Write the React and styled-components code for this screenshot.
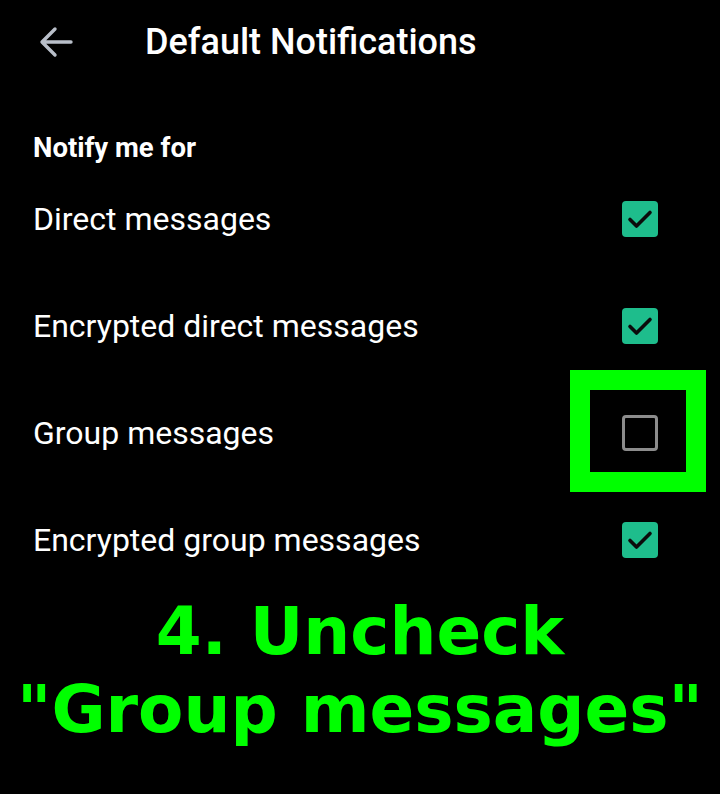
import React from "react";
import styled, { createGlobalStyle } from "styled-components";

const Global = createGlobalStyle`
  html, body { margin: 0; padding: 0; background: #000; }
  body { font-family: Roboto, "Noto Sans", sans-serif; color: #fff; }
`;

const Screen = styled.div`
  width: 720px;
  height: 794px;
  background: #000;
  display: flex;
  flex-direction: column;
  overflow: hidden;
`;

const Header = styled.header`
  height: 84px;
  display: flex;
  align-items: center;
  padding-left: 38px;
`;

const BackButton = styled.div`
  width: 36px;
  height: 36px;
  display: flex;
  align-items: center;
  justify-content: center;
  margin-right: 71px;
`;

const Title = styled.h1`
  margin: 0;
  font-family: Roboto, sans-serif;
  font-weight: 500;
  font-size: 36px;
  color: #fff;
  letter-spacing: 0;
`;

const Section = styled.section`
  padding: 48px 62px 0 33px;
  display: flex;
  flex-direction: column;
`;

const SectionTitle = styled.h2`
  margin: 0;
  font-family: Roboto, sans-serif;
  font-weight: 700;
  font-size: 27.5px;
  line-height: 32px;
  color: #fff;
`;

const Rows = styled.div`
  margin-top: 1px;
  display: flex;
  flex-direction: column;
`;

const Row = styled.div`
  height: 107px;
  display: flex;
  align-items: center;
  justify-content: space-between;
`;

const Label = styled.span`
  font-family: Roboto, sans-serif;
  font-size: 32px;
  font-weight: 400;
  color: #fff;
`;

const BoxWrap = styled.div`
  position: relative;
  width: 36px;
  height: 36px;
`;

const Box = styled.div`
  box-sizing: border-box;
  width: 36px;
  height: 36px;
  border-radius: 4px;
  display: flex;
  align-items: center;
  justify-content: center;
  background: ${(p) => (p.$checked ? "#1ebd8c" : "transparent")};
  border: ${(p) => (p.$checked ? "none" : "3px solid #8c8c8c")};
`;

const Highlight = styled.div`
  position: absolute;
  box-sizing: border-box;
  left: -52px;
  top: -45px;
  width: 136px;
  height: 122px;
  border: 20px solid #00ff00;
`;

const Caption = styled.div`
  margin-top: 0;
  text-align: center;
  font-family: "DejaVu Sans", sans-serif;
  font-weight: 700;
  font-size: 66px;
  line-height: 78px;
  color: #00ff00;
`;

const Check = () => (
  <svg width="26" height="22" viewBox="0 0 26 22" fill="none">
    <path d="M3 11.5 L9.5 18 L23 4.5" stroke="#0b0b0b" strokeWidth="3.6" strokeLinecap="round" strokeLinejoin="round" />
  </svg>
);

const Arrow = () => (
  <svg width="34" height="32" viewBox="0 0 34 32" fill="none">
    <path d="M32 16 H4 M16 3 L3 16 L16 29" stroke="#b9bfc9" strokeWidth="3.4" strokeLinecap="round" strokeLinejoin="round" />
  </svg>
);

const items = [
  { label: "Direct messages", checked: true },
  { label: "Encrypted direct messages", checked: true },
  { label: "Group messages", checked: false, highlight: true },
  { label: "Encrypted group messages", checked: true },
];

export default function App() {
  return (
    <>
      <Global />
      <Screen>
        <Header>
          <BackButton><Arrow /></BackButton>
          <Title>Default Notifications</Title>
        </Header>
        <Section>
          <SectionTitle>Notify me for</SectionTitle>
          <Rows>
            {items.map((it) => (
              <Row key={it.label}>
                <Label>{it.label}</Label>
                <BoxWrap>
                  <Box $checked={it.checked}>{it.checked && <Check />}</Box>
                  {it.highlight && <Highlight />}
                </BoxWrap>
              </Row>
            ))}
          </Rows>
        </Section>
        <Caption>
          4. Uncheck
          <br />
          "Group messages"
        </Caption>
      </Screen>
    </>
  );
}
